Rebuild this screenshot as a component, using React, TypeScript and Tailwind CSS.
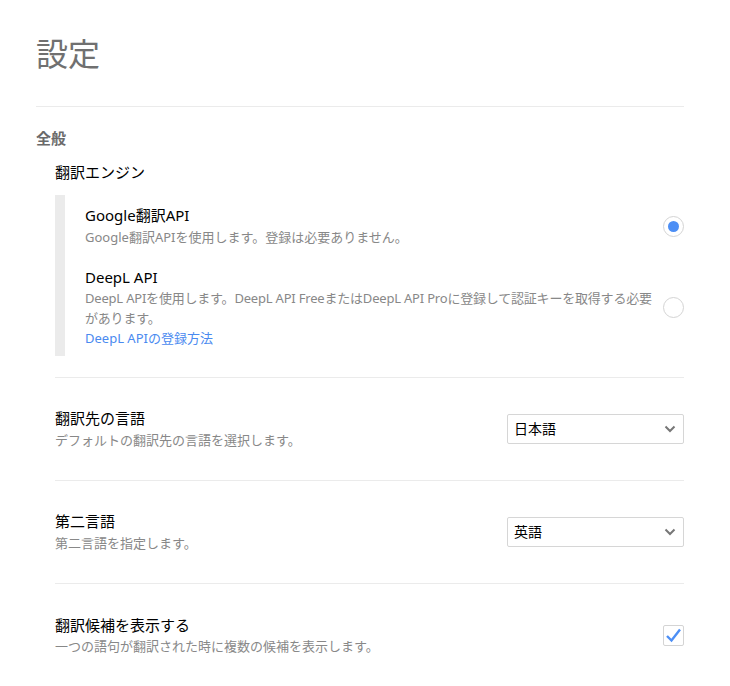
import React from 'react'

const font = { fontFamily: '"Noto Sans", "Noto Sans CJK JP", sans-serif' }

function Radio({ checked }: { checked?: boolean }) {
  return (
    <div className="w-[21px] h-[21px] rounded-full border border-[#d4d4d4] bg-white flex items-center justify-center shrink-0">
      {checked && <div className="w-[11px] h-[11px] rounded-full bg-[#4d8ff5]" />}
    </div>
  )
}

function Select({ value }: { value: string }) {
  return (
    <div className="w-[177px] h-[30px] border border-[#d6d6d6] rounded-[2px] bg-white flex items-center justify-between pl-[6px] pr-[6px] shrink-0">
      <span className="text-[14px] text-black leading-[20px]">{value}</span>
      <svg width="12" height="8" viewBox="0 0 12 8" className="mr-[1px]">
        <path d="M1.5 1.5 L6 6 L10.5 1.5" fill="none" stroke="#777" strokeWidth="2" />
      </svg>
    </div>
  )
}

function Row({ title, desc, control }: { title: string; desc: string; control: React.ReactNode }) {
  return (
    <div className="flex items-center justify-between py-[30px]">
      <div>
        <div className="text-[15px] leading-[20px] text-black">{title}</div>
        <div className="text-[13px] leading-[20px] text-[#888] mt-[2px]">{desc}</div>
      </div>
      {control}
    </div>
  )
}

export default function App() {
  return (
    <div className="bg-white min-h-[686px] w-[730px] pl-[36px] pt-[34px]" style={font}>
      <div className="w-[648px]">
        <h1 className="text-[32px] leading-[40px] text-[#707070] font-normal">設定</h1>
        <div className="border-t border-[#ebebeb] mt-[32px]" />

        <h2 className="text-[15px] leading-[20px] font-bold text-[#6a6a6a] mt-[21px]">全般</h2>

        <div className="ml-[19px]">
          <div className="text-[15px] leading-[20px] text-black mt-[14px]">翻訳エンジン</div>

          {/* engine list */}
          <div className="mt-[13px] border-l-[10px] border-[#ebebeb] pl-[20px] pt-[10px] pb-[8px]">
            <div className="flex items-center justify-between">
              <div>
                <div className="text-[15px] leading-[20px] text-black">Google翻訳API</div>
                <div className="text-[13px] leading-[20px] text-[#888] mt-[2px]">Google翻訳APIを使用します。登録は必要ありません。</div>
              </div>
              <Radio checked />
            </div>
            <div className="flex items-center justify-between gap-[6px] mt-[20px]">
              <div className="min-w-0">
                <div className="text-[15px] leading-[20px] text-black">DeepL API</div>
                <div className="text-[13px] leading-[20px] text-[#888] mt-[1px] tracking-[-0.2px] whitespace-nowrap">
                  DeepL APIを使用します。DeepL API FreeまたはDeepL API Proに登録して認証キーを取得する必要
                  <br />
                  があります。
                </div>
                <div className="text-[13px] leading-[20px] text-[#4a8af0]">DeepL APIの登録方法</div>
              </div>
              <Radio />
            </div>
          </div>

          <div className="border-t border-[#ebebeb] mt-[21px]" />
          <Row title="翻訳先の言語" desc="デフォルトの翻訳先の言語を選択します。" control={<Select value="日本語" />} />
          <div className="border-t border-[#ebebeb]" />
          <Row title="第二言語" desc="第二言語を指定します。" control={<Select value="英語" />} />
          <div className="border-t border-[#ebebeb]" />
          <div className="flex items-center justify-between pt-[31px]">
            <div>
              <div className="text-[15px] leading-[20px] text-black">翻訳候補を表示する</div>
              <div className="text-[13px] leading-[20px] text-[#888] mt-[1px]">一つの語句が翻訳された時に複数の候補を表示します。</div>
            </div>
            <div className="w-[21px] h-[21px] border border-[#d4d4d4] rounded-[2px] bg-white flex items-center justify-center">
              <svg width="17" height="15" viewBox="0 0 17 15">
                <path d="M2 8 L6.5 12.5 L15 1.5" fill="none" stroke="#4d8ff5" strokeWidth="2.4" />
              </svg>
            </div>
          </div>
        </div>
      </div>
    </div>
  )
}
